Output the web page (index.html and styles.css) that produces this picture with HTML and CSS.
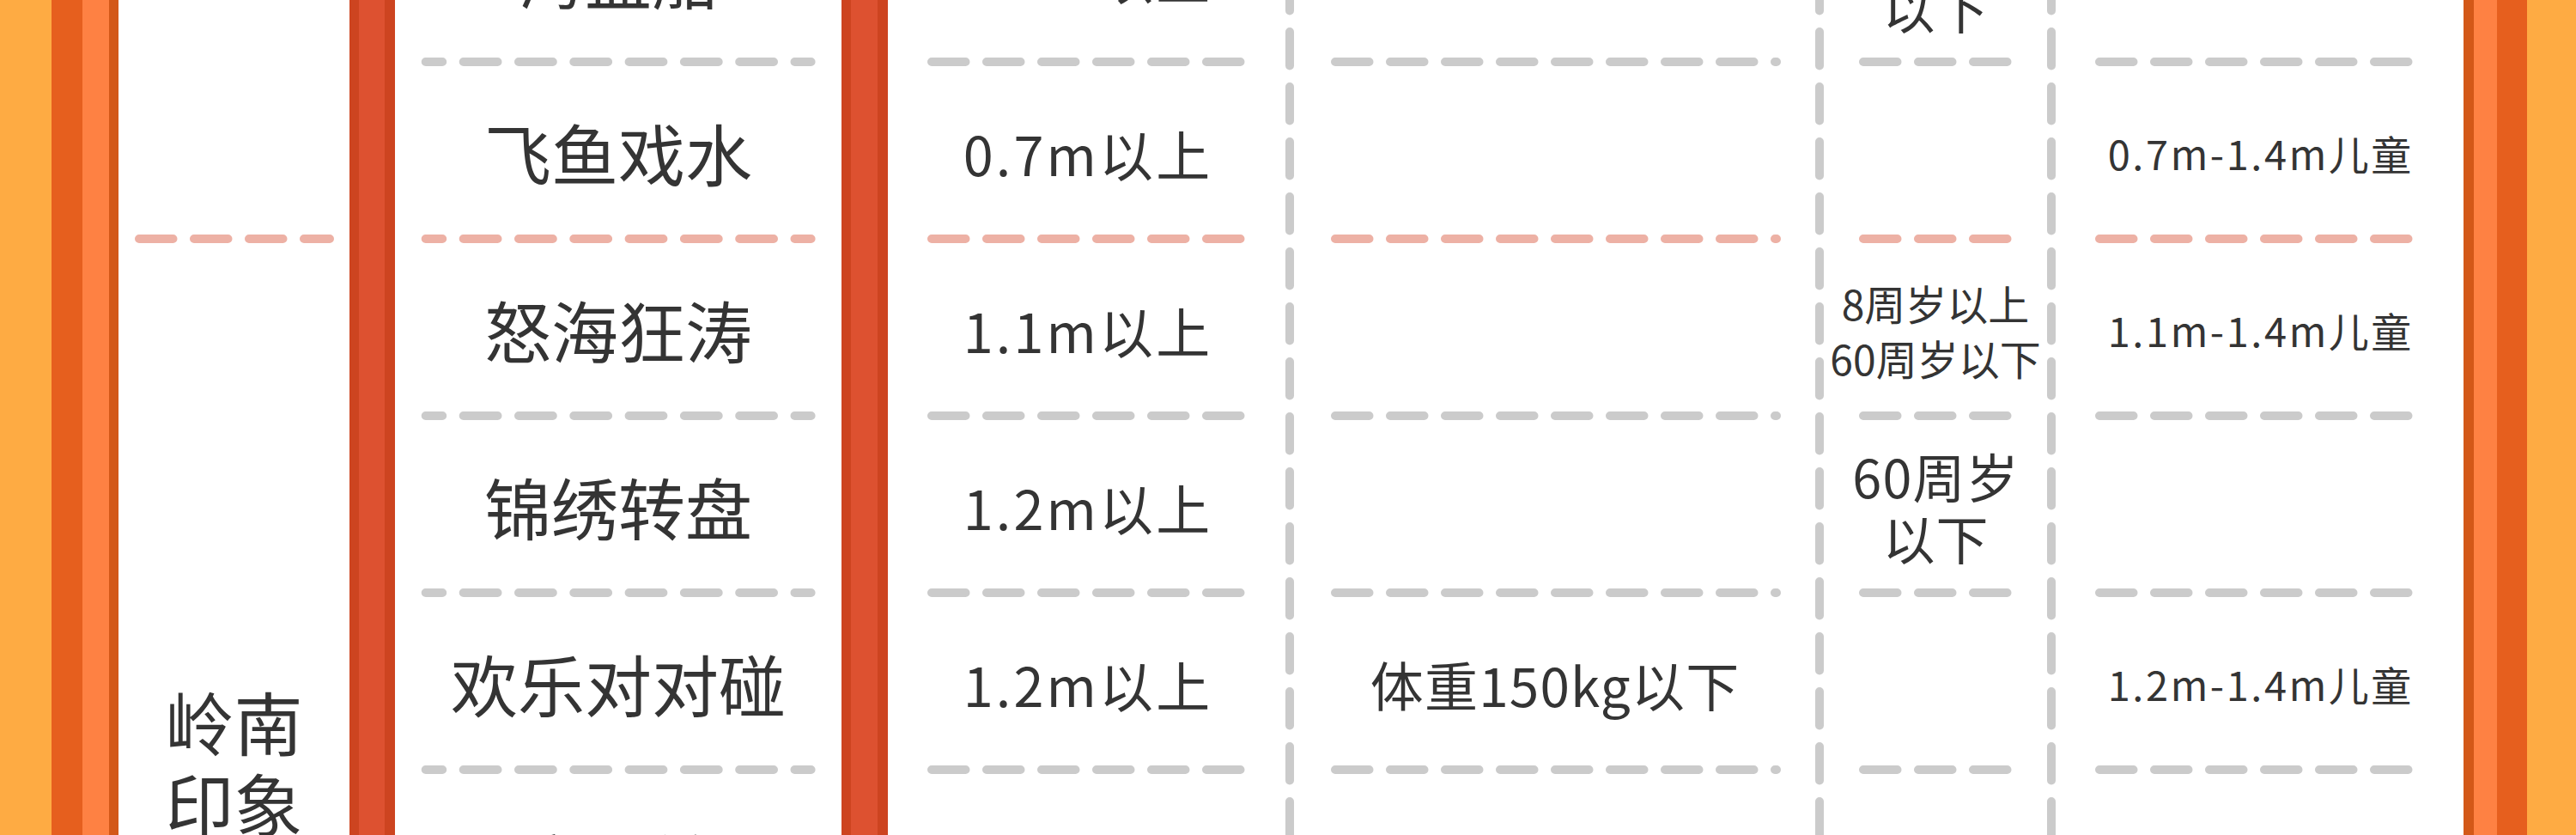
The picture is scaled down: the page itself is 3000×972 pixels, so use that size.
FILE: index.html
```html
<!DOCTYPE html>
<html lang="zh-CN">
<head>
<meta charset="utf-8">
<title>项目须知</title>
<link rel="stylesheet" href="styles.css">
</head>
<body>
<div class="frame">
  <div class="edge">
    <div class="s-yellow"></div><div class="s-dark"></div><div class="s-light"></div><div class="s-thin-l"></div>
  </div>

  <div class="table">
    <div class="rbar rb1"></div>
    <div class="rbar rb2"></div>
    <div class="vl vl1"><svg><line x1="5" y1="0" x2="5" y2="100%"/></svg></div>
    <div class="vl vl2"><svg><line x1="5" y1="0" x2="5" y2="100%"/></svg></div>
    <div class="vl vl3"><svg><line x1="5" y1="0" x2="5" y2="100%"/></svg></div>

    <div class="group g1"></div>
    <div class="group g2"><span>岭南<br>印象</span></div>

    <!-- row A -->
    <div class="cell name">海盗船</div>
    <div class="cell val">1.3m以上</div>
    <div class="cell"></div>
    <div class="cell age">60周岁<br>以下</div>
    <div class="cell"></div>
    <!-- line -->
    <div class="ln gray"><svg width="520" height="10"><line class="d2" x1="35.7" y1="5" x2="484.6" y2="5"/></svg></div>
    <div class="ln gray"><svg width="463" height="10"><line x1="51" y1="5" x2="410.5" y2="5"/></svg></div>
    <div class="ln gray"><svg width="607" height="10"><line x1="48" y1="5" x2="562" y2="5"/></svg></div>
    <div class="ln gray"><svg width="260" height="10"><line x1="46" y1="5" x2="213.5" y2="5"/></svg></div>
    <div class="ln gray"><svg width="475" height="10"><line x1="51" y1="5" x2="410.5" y2="5"/></svg></div>

    <!-- row B -->
    <div class="cell name">飞鱼戏水</div>
    <div class="cell val">0.7m以上</div>
    <div class="cell"></div>
    <div class="cell"></div>
    <div class="cell kid">0.7m-1.4m儿童</div>
    <!-- group line -->
    <div class="ln red"><svg width="269" height="10"><line x1="24" y1="5" x2="246" y2="5"/></svg></div>
    <div class="ln red"><svg width="520" height="10"><line class="d2" x1="35.7" y1="5" x2="484.6" y2="5"/></svg></div>
    <div class="ln red"><svg width="463" height="10"><line x1="51" y1="5" x2="410.5" y2="5"/></svg></div>
    <div class="ln red"><svg width="607" height="10"><line x1="48" y1="5" x2="562" y2="5"/></svg></div>
    <div class="ln red"><svg width="260" height="10"><line x1="46" y1="5" x2="213.5" y2="5"/></svg></div>
    <div class="ln red"><svg width="475" height="10"><line x1="51" y1="5" x2="410.5" y2="5"/></svg></div>

    <!-- row C -->
    <div class="cell name">怒海狂涛</div>
    <div class="cell val">1.1m以上</div>
    <div class="cell"></div>
    <div class="cell age-s">8周岁以上<br>60周岁以下</div>
    <div class="cell kid">1.1m-1.4m儿童</div>
    <!-- line -->
    <div class="ln gray"><svg width="520" height="10"><line class="d2" x1="35.7" y1="5" x2="484.6" y2="5"/></svg></div>
    <div class="ln gray"><svg width="463" height="10"><line x1="51" y1="5" x2="410.5" y2="5"/></svg></div>
    <div class="ln gray"><svg width="607" height="10"><line x1="48" y1="5" x2="562" y2="5"/></svg></div>
    <div class="ln gray"><svg width="260" height="10"><line x1="46" y1="5" x2="213.5" y2="5"/></svg></div>
    <div class="ln gray"><svg width="475" height="10"><line x1="51" y1="5" x2="410.5" y2="5"/></svg></div>

    <!-- row D -->
    <div class="cell name">锦绣转盘</div>
    <div class="cell val">1.2m以上</div>
    <div class="cell"></div>
    <div class="cell age">60周岁<br>以下</div>
    <div class="cell"></div>
    <!-- line -->
    <div class="ln gray"><svg width="520" height="10"><line class="d2" x1="35.7" y1="5" x2="484.6" y2="5"/></svg></div>
    <div class="ln gray"><svg width="463" height="10"><line x1="51" y1="5" x2="410.5" y2="5"/></svg></div>
    <div class="ln gray"><svg width="607" height="10"><line x1="48" y1="5" x2="562" y2="5"/></svg></div>
    <div class="ln gray"><svg width="260" height="10"><line x1="46" y1="5" x2="213.5" y2="5"/></svg></div>
    <div class="ln gray"><svg width="475" height="10"><line x1="51" y1="5" x2="410.5" y2="5"/></svg></div>

    <!-- row E -->
    <div class="cell name">欢乐对对碰</div>
    <div class="cell val">1.2m以上</div>
    <div class="cell weight">体重150kg以下</div>
    <div class="cell"></div>
    <div class="cell kid">1.2m-1.4m儿童</div>
    <!-- line -->
    <div class="ln gray"><svg width="520" height="10"><line class="d2" x1="35.7" y1="5" x2="484.6" y2="5"/></svg></div>
    <div class="ln gray"><svg width="463" height="10"><line x1="51" y1="5" x2="410.5" y2="5"/></svg></div>
    <div class="ln gray"><svg width="607" height="10"><line x1="48" y1="5" x2="562" y2="5"/></svg></div>
    <div class="ln gray"><svg width="260" height="10"><line x1="46" y1="5" x2="213.5" y2="5"/></svg></div>
    <div class="ln gray"><svg width="475" height="10"><line x1="51" y1="5" x2="410.5" y2="5"/></svg></div>

    <!-- row F -->
    <div class="cell name low">摩天轮</div>
    <div class="cell"></div>
    <div class="cell"></div>
    <div class="cell"></div>
    <div class="cell"></div>
  </div>

  <div class="edge">
    <div class="s-thin-r"></div><div class="s-light-r"></div><div class="s-dark-r"></div><div class="s-yellow-r"></div>
  </div>
</div>
</body>
</html>
```

FILE: styles.css
```css
html, body {
  margin: 0;
  padding: 0;
}
body {
  width: 3000px;
  height: 972px;
  overflow: hidden;
  background: #ffffff;
  font-family: "Noto Sans CJK SC", "Noto Sans", sans-serif;
  color: #343434;
}
.frame {
  display: flex;
  width: 3000px;
  height: 972px;
  overflow: hidden;
}
.edge {
  display: flex;
  flex: none;
  height: 972px;
}
.s-yellow { width: 60px; background: #feab43; }
.s-dark { width: 36px; background: #e65f1e; }
.s-light { width: 31px; background: #fe8143; }
.s-thin-l { width: 11px; background: #d35818; }
.s-thin-r { width: 12px; background: #d35818; }
.s-light-r { width: 27px; background: #fe8143; }
.s-dark-r { width: 35px; background: #e65f1e; }
.s-yellow-r { width: 57px; background: #feab43; }

.table {
  flex: none;
  align-self: flex-start;
  margin-top: -129px;
  display: grid;
  grid-template-columns: 269px 53px 520px 54px 463px 10px 607px 10px 260px 10px 475px;
  grid-template-rows: repeat(8, 196px 10px);
  background: #ffffff;
}

.rbar {
  grid-row: 1 / -1;
  box-sizing: border-box;
  background: #dd5130;
  border-left: 11px solid #cd4420;
  border-right: 12px solid #cd4420;
}
.rb1 { grid-column: 2; }
.rb2 { grid-column: 4; }

.vl {
  grid-row: 1 / -1;
}
.vl1 { grid-column: 6; }
.vl2 { grid-column: 8; }
.vl3 { grid-column: 10; }
.vl svg {
  display: block;
  width: 10px;
  height: 100%;
}
.vl line {
  stroke: #cbcbcb;
  stroke-width: 10;
  stroke-linecap: round;
  stroke-dasharray: 39.5 24.5;
  stroke-dashoffset: 26;
}

.group {
  grid-column: 1;
  display: flex;
  align-items: center;
  justify-content: center;
  box-sizing: border-box;
  font-size: 80px;
  line-height: 95px;
  text-align: center;
}
.g1 { grid-row: 1 / 4; }
.g2 { grid-row: 5 / 17; padding-bottom: 30px; }

.cell {
  display: flex;
  align-items: center;
  justify-content: center;
  text-align: center;
  box-sizing: border-box;
  padding-top: 6px;
  white-space: nowrap;
}
.name { font-size: 78px; line-height: 1.2; }
.low { padding-top: 12px; }
.val {
  font-size: 63px;
  line-height: 1.2;
  letter-spacing: 0.05em;
  padding-left: 0.05em;
}
.weight {
  font-size: 62px;
  line-height: 1.2;
  letter-spacing: 0.02em;
  padding-left: 0.02em;
}
.kid {
  font-size: 47px;
  line-height: 1.2;
  letter-spacing: 0.055em;
  padding-left: 0.055em;
}
.age {
  font-size: 61px;
  line-height: 72px;
  letter-spacing: 0.02em;
  padding-left: 0.02em;
}
.age-s {
  font-size: 48px;
  line-height: 64px;
}

.ln svg {
  display: block;
}
.ln line {
  stroke-width: 10;
  stroke-linecap: round;
  stroke-dasharray: 39.5 24.5;
}
.ln line.d2 {
  stroke-dasharray: 39.8 24.5;
  stroke-dashoffset: 20.3;
}
.gray line { stroke: #cbcbcb; }
.red line { stroke: #edb1a5; }
```
